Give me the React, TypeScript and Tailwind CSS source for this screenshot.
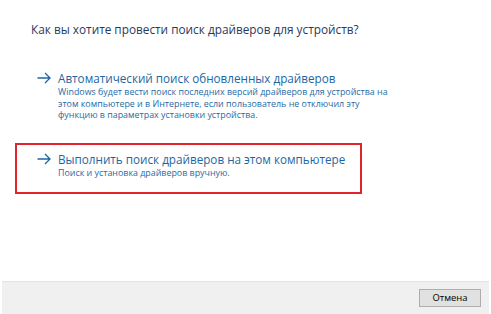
function Arrow() {
  return (
    <svg width="14" height="12" viewBox="0 0 14 12" className="shrink-0" fill="none">
      <path d="M0.5 6 H13 M8 1 L13 6 L8 11" stroke="#1c67a3" strokeWidth="1.3" />
    </svg>
  )
}

function Option({ title, desc }: { title: string; desc: string[] }) {
  return (
    <div className="flex">
      <div className="w-[21px] shrink-0 pt-[2px]">
        <Arrow />
      </div>
      <div>
        <p className="text-[11.7px] leading-[16px] text-[#1c67a3] whitespace-nowrap">{title}</p>
        <div className="text-[8.9px] leading-[11.5px] text-[#1f6aa5] whitespace-nowrap">
          {desc.map((d) => (
            <p key={d}>{d}</p>
          ))}
        </div>
      </div>
    </div>
  )
}

export default function App() {
  return (
    <div className="w-[491px] h-[314px] bg-white flex flex-col font-['Open_Sans',sans-serif]">
      <div className="flex-1 pl-[31px] pt-[20px]">
        <h1 className="text-[11.8px] leading-[18px] text-[#1f3b5c]">
          Как вы хотите провести поиск драйверов для устройств?
        </h1>

        <div className="mt-[32px] pl-[6px]">
          <Option
            title="Автоматический поиск обновленных драйверов"
            desc={[
              'Windows будет вести поиск последних версий драйверов для устройства на',
              'этом компьютере и в Интернете, если пользователь не отключил эту',
              'функцию в параметрах установки устройства.',
            ]}
          />
        </div>

        <div className="mt-[22px] -ml-[16px] w-[347px] border-2 border-[#e3232b] pl-[20px] pt-[6px] pb-[14px]">
          <Option title="Выполнить поиск драйверов на этом компьютере" desc={['Поиск и установка драйверов вручную.']} />
        </div>
      </div>

      <div className="h-[33px] mx-[2px] bg-[#f0f0f0] border-t border-[#e4e4e4] flex items-start justify-end pr-[8px] pt-[7px]">
        <button className="w-[62px] h-[18px] bg-[#e1e1e1] border border-[#adadad] text-[9.4px] leading-none text-black">
          Отмена
        </button>
      </div>
    </div>
  )
}
